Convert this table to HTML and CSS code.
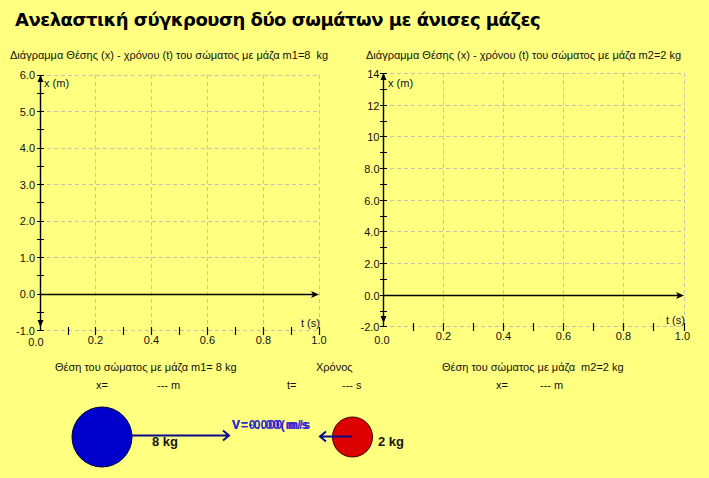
FILE: index.html
```html
<!DOCTYPE html>
<html lang="el">
<head>
<meta charset="utf-8">
<title>Ανελαστική σύγκρουση</title>
<link rel="stylesheet" href="styles.css">
</head>
<body>
<h1 class="title">Ανελαστική σύγκρουση δύο σωμάτων με άνισες μάζες</h1>
<div class="charts">
  <section class="panel panel-left">
    <p class="caption">Διάγραμμα Θέσης (x) - χρόνου (t) του σώματος με μάζα m1=8  kg</p>
    <svg class="chart" width="352" height="296" viewBox="0 62 352 296">
      <path class="grid" d="M40 75.5H319M40 111.5H319M40 148.5H319M40 184.5H319M40 221.5H319M40 257.5H319M40 294.5H319M40 330.5H319M95.5 75V331M151.5 75V331M207.5 75V331M263.5 75V331M319.5 75V331"/>
      <path class="axis" d="M40.5 75V331M40 294.5H316"/>
      <path class="tick" d="M37 75.5H44M37 93.5H44M37 111.5H44M37 129.5H44M37 148.5H44M37 166.5H44M37 184.5H44M37 202.5H44M37 221.5H44M37 239.5H44M37 257.5H44M37 275.5H44M37 294.5H44M37 312.5H44M37 330.5H44M68.5 327V335M95.5 327V335M123.5 327V335M151.5 327V335M179.5 327V335M207.5 327V335M235.5 327V335M263.5 327V335M291.5 327V335M319.5 327V335"/>
      <polygon class="arrow" points="40.5,75 37.5,82 43.5,82"/>
      <polygon class="arrow" points="40.5,327 37.5,320 43.5,320"/>
      <polygon class="arrow" points="319,294.5 311,291 313,294.5 311,298"/>
      <g class="ylab">
        <text x="35" y="79">6.0</text>
        <text x="35" y="115.5">5.0</text>
        <text x="35" y="152">4.0</text>
        <text x="35" y="188.5">3.0</text>
        <text x="35" y="225">2.0</text>
        <text x="35" y="261.5">1.0</text>
        <text x="35" y="298">0.0</text>
        <text x="35" y="334.5">-1.0</text>
      </g>
      <g class="xlab">
        <text x="36" y="346">0.0</text>
        <text x="95.5" y="344">0.2</text>
        <text x="151.5" y="344">0.4</text>
        <text x="207.5" y="344">0.6</text>
        <text x="263.5" y="344">0.8</text>
        <text x="319" y="344">1.0</text>
      </g>
      <text class="unit" x="44" y="87">x (m)</text>
      <text class="unit" x="301" y="327">t (s)</text>
    </svg>
  </section>
  <section class="panel panel-right">
    <p class="caption">Διάγραμμα Θέσης (x) - χρόνου (t) του σώματος με μάζα m2=2 kg</p>
    <svg class="chart" width="357" height="296" viewBox="352 62 357 296">
      <path class="grid" d="M383 73.5H684M383 105.5H684M383 136.5H684M383 168.5H684M383 200.5H684M383 231.5H684M383 263.5H684M383 295.5H684M383 326.5H684M443.5 73V327M503.5 73V327M563.5 73V327M623.5 73V327M684.5 73V327"/>
      <path class="axis" d="M383.5 73V327M383 295.5H681"/>
      <path class="tick" d="M380 73.5H387M380 89.5H387M380 105.5H387M380 121.5H387M380 136.5H387M380 152.5H387M380 168.5H387M380 184.5H387M380 200.5H387M380 216.5H387M380 231.5H387M380 247.5H387M380 263.5H387M380 279.5H387M380 295.5H387M380 311.5H387M380 326.5H387M413.5 323V331M443.5 323V331M473.5 323V331M503.5 323V331M533.5 323V331M563.5 323V331M593.5 323V331M623.5 323V331M653.5 323V331M684.5 323V331"/>
      <polygon class="arrow" points="383.5,73 380.5,80 386.5,80"/>
      <polygon class="arrow" points="383.5,323 380.5,316 386.5,316"/>
      <polygon class="arrow" points="684,295.5 676,292 678,295.5 676,299"/>
      <g class="ylab">
        <text x="379.5" y="77.5">14</text>
        <text x="379.5" y="109.5">12</text>
        <text x="379.5" y="140.5">10</text>
        <text x="379.5" y="172.5">8.0</text>
        <text x="379.5" y="204.5">6.0</text>
        <text x="379.5" y="235.5">4.0</text>
        <text x="379.5" y="267.5">2.0</text>
        <text x="379.5" y="299.5">0.0</text>
        <text x="379.5" y="330.5">-2.0</text>
      </g>
      <g class="xlab">
        <text x="382" y="344">0.0</text>
        <text x="443.5" y="340">0.2</text>
        <text x="503.5" y="340">0.4</text>
        <text x="563.5" y="340">0.6</text>
        <text x="623.5" y="340">0.8</text>
        <text x="682.5" y="340">1.0</text>
      </g>
      <text class="unit" x="388" y="86.5">x (m)</text>
      <text class="unit" x="666" y="324">t (s)</text>
    </svg>
  </section>
</div>
<div class="info">
  <div class="info-col info-left">
    <div class="info-head">Θέση του σώματος με μάζα m1= 8 kg</div>
    <div class="info-val"><span class="lbl">x=</span><span>--- m</span></div>
  </div>
  <div class="info-col info-mid">
    <div class="info-head">Χρόνος</div>
    <div class="info-val"><span class="lbl">t=</span><span>--- s</span></div>
  </div>
  <div class="info-col info-right">
    <div class="info-head">Θέση του σώματος με μάζα  m2=2 kg</div>
    <div class="info-val"><span class="lbl">x=</span><span>--- m</span></div>
  </div>
</div>
<svg class="scene" width="709" height="84" viewBox="0 394 709 84">
  <circle class="ball-blue" cx="102" cy="437" r="30"/>
  <path class="vec" d="M132 435.5H229M223 430.5L229 435.5L223 440.5"/>
  <text class="mass" x="152" y="446">8 kg</text>
  <circle class="ball-red" cx="352.5" cy="437" r="20"/>
  <path class="vec" d="M352 436.5H320M326 431.5L320 436.5L326 441.5"/>
  <text class="mass" x="378" y="446">2 kg</text>
  <text class="vel" x="232" y="429">V=0.000 m/s</text>
  <text class="vel" x="232" y="429">V=-0.00(m/s</text>
</svg>
</body>
</html>
```

FILE: styles.css
```css
html, body {
  margin: 0;
  padding: 0;
}
body {
  width: 709px;
  height: 478px;
  overflow: hidden;
  background: #ffff80;
  font-family: "Liberation Sans", Arial, sans-serif;
  font-size: 11px;
  color: #111;
}
.title {
  margin: 0;
  padding: 8px 0 0 15px;
  height: 24px;
  font: bold 18px/24px "DejaVu Sans", Verdana, sans-serif;
  letter-spacing: -0.5px;
  color: #000;
}
.charts {
  display: flex;
  margin-top: 16px;
}
.panel-left { width: 352px; }
.panel-right { width: 357px; }
.caption {
  margin: 0;
  height: 14px;
  line-height: 14px;
  white-space: pre;
}
.panel-left .caption { padding-left: 10px; }
.panel-right .caption { padding-left: 14px; }
.chart, .scene { display: block; }
.grid {
  fill: none;
  stroke: #c4c4b4;
  stroke-width: 1;
  stroke-dasharray: 4 3;
}
.axis, .tick {
  fill: none;
  stroke: #000;
  stroke-width: 1.4;
}
.tick { stroke-width: 1.2; }
.arrow { fill: #000; }
.ylab text, .xlab text, .unit {
  font-family: "Liberation Sans", Arial, sans-serif;
  font-size: 11px;
  fill: #111;
}
.ylab { text-anchor: end; }
.xlab { text-anchor: middle; }
.unit { fill: #101030; }
.info {
  display: flex;
  height: 36px;
  line-height: 18px;
}
.info-left { width: 280px; }
.info-mid { width: 140px; }
.info-right { width: 289px; }
.info-head { white-space: pre; }
.info-val { display: flex; }
.info-left .info-head { padding-left: 55px; }
.info-left .info-val { padding-left: 96px; }
.info-left .lbl { width: 61px; }
.info-mid .info-head { padding-left: 36px; }
.info-mid .info-val { padding-left: 7px; }
.info-mid .lbl { width: 55px; }
.info-right .info-head { padding-left: 22px; }
.info-right .info-val { padding-left: 76px; }
.info-right .lbl { width: 44px; }
.ball-blue { fill: #0000cd; stroke: #00003a; stroke-width: 1; }
.ball-red { fill: #dd0000; stroke: #3a0000; stroke-width: 1; }
.vec { fill: none; stroke: #0a0a8a; stroke-width: 2; }
.mass {
  font: bold 13px "Liberation Sans", Arial, sans-serif;
  fill: #151515;
}
.vel {
  font: bold 12px "Liberation Sans", Arial, sans-serif;
  letter-spacing: 0.9px;
  fill: #2a2ad0;
}
```
